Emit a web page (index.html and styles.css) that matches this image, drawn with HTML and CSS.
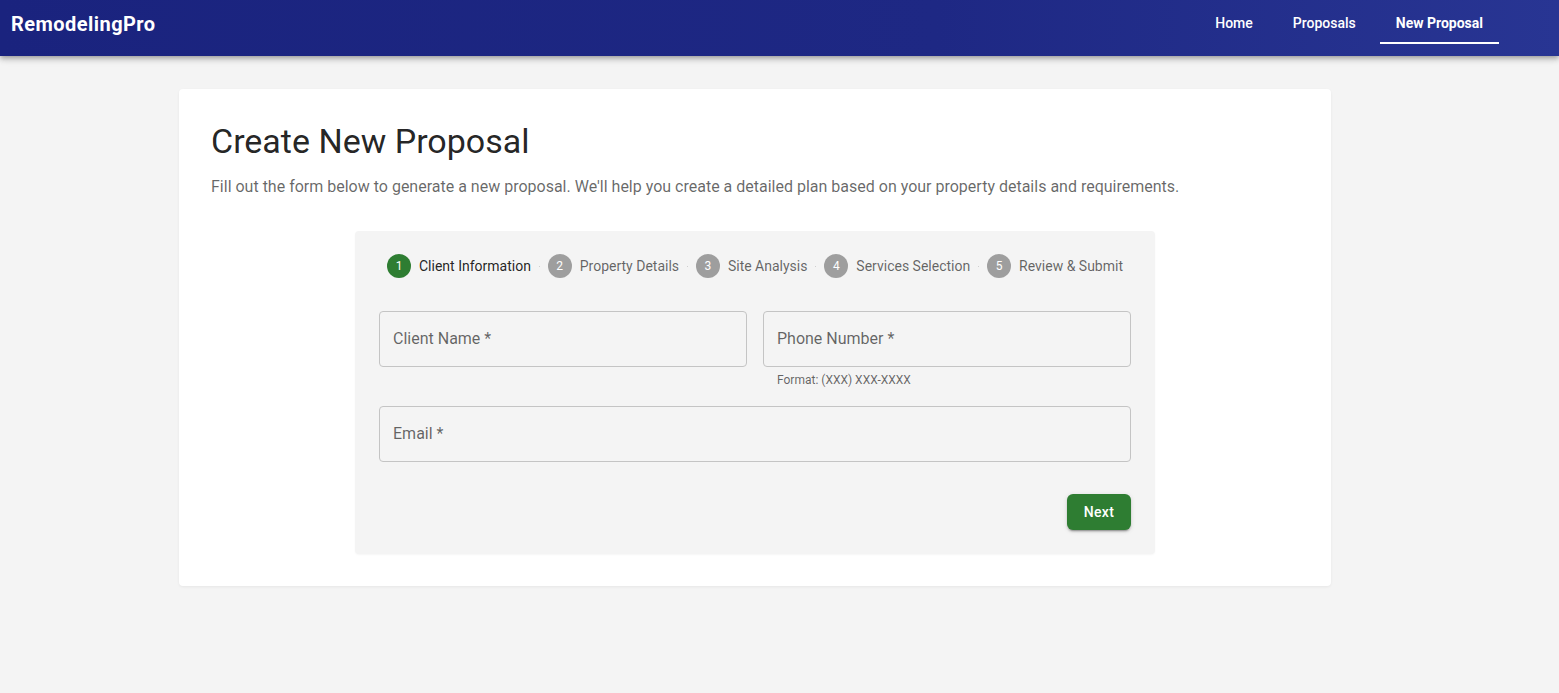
FILE: index.html
```html
<!DOCTYPE html>
<html lang="en">
<head>
<meta charset="utf-8">
<title>RemodelingPro - New Proposal</title>
<link rel="stylesheet" href="styles.css">
</head>
<body>
<header class="appbar">
  <div class="brand">RemodelingPro</div>
  <nav class="nav">
    <a class="nav-link" href="#">Home</a>
    <a class="nav-link" href="#">Proposals</a>
    <a class="nav-link active" href="#">New Proposal</a>
  </nav>
</header>
<main class="container">
  <section class="card">
    <h1 class="title">Create New Proposal</h1>
    <p class="intro">Fill out the form below to generate a new proposal. We'll help you create a detailed plan based on your property details and requirements.</p>
    <div class="form-paper">
      <ol class="stepper">
        <li class="step active"><span class="step-icon">1</span><span class="step-label">Client Information</span></li>
        <li class="connector"></li>
        <li class="step"><span class="step-icon">2</span><span class="step-label">Property Details</span></li>
        <li class="connector"></li>
        <li class="step"><span class="step-icon">3</span><span class="step-label">Site Analysis</span></li>
        <li class="connector"></li>
        <li class="step"><span class="step-icon">4</span><span class="step-label">Services Selection</span></li>
        <li class="connector"></li>
        <li class="step"><span class="step-icon">5</span><span class="step-label">Review &amp; Submit</span></li>
      </ol>
      <div class="fields">
        <div class="field">
          <div class="input">Client Name *</div>
        </div>
        <div class="field">
          <div class="input">Phone Number *</div>
          <div class="helper">Format: (XXX) XXX-XXXX</div>
        </div>
        <div class="field wide">
          <div class="input">Email *</div>
        </div>
      </div>
      <div class="actions">
        <button class="btn-next" type="button">Next</button>
      </div>
    </div>
  </section>
</main>
</body>
</html>
```
FILE: styles.css
```css
* { box-sizing: border-box; }
html, body { margin: 0; padding: 0; }
body {
  background: #f4f4f4;
  font-family: Roboto, "Noto Sans", Arial, sans-serif;
  color: rgba(0,0,0,0.87);
  min-height: 693px;
}
.appbar {
  height: 56px;
  display: flex;
  align-items: center;
  justify-content: space-between;
  padding: 0 60px 0 11px;
  background: linear-gradient(90deg, #1a237e 0%, #1e2884 60%, #283593 100%);
  box-shadow: 0 2px 4px -1px rgba(0,0,0,0.2), 0 4px 5px 0 rgba(0,0,0,0.14), 0 1px 10px 0 rgba(0,0,0,0.12);
  position: relative;
  z-index: 1;
}
.brand {
  color: #fff;
  font-size: 20px;
  font-weight: 700;
  letter-spacing: 0.45px;
  margin-top: -8px;
}
.nav { display: flex; gap: 8px; height: 100%; align-items: flex-start; }
.nav-link {
  color: #fff;
  text-decoration: none;
  font-size: 14px;
  font-weight: 500;
  padding: 3px 16px 0;
  display: flex;
  align-items: center;
  height: 44px;
  border-bottom: 2px solid transparent;
}
.nav-link.active {
  font-weight: 700;
  border-bottom-color: #fff;
}
.container {
  width: 1201px;
  margin: 0 auto;
  padding-top: 33px;
}
.card {
  width: 1152px;
  background: #fff;
  border-radius: 4px;
  padding: 32px;
  box-shadow: 0 1px 3px 0 rgba(0,0,0,0.06);
}
.title {
  margin: 0 0 13px;
  font-size: 34px;
  font-weight: 400;
  line-height: 41px;
  color: rgba(0,0,0,0.87);
}
.intro {
  margin: 0 0 32px;
  font-size: 16px;
  line-height: 24px;
  color: rgba(0,0,0,0.6);
}
.form-paper {
  max-width: 800px;
  margin: 0 auto;
  background: #f4f4f4;
  border-radius: 4px;
  padding: 23px 24px 24px;
  box-shadow: 0 1px 2px 0 rgba(0,0,0,0.04);
}
.stepper {
  list-style: none;
  margin: 0 0 33px;
  padding: 0;
  display: flex;
  align-items: center;
  justify-content: center;
  height: 24px;
}
.step {
  display: flex;
  align-items: center;
  padding: 0 8px;
}
.step-icon {
  width: 24px;
  height: 24px;
  border-radius: 50%;
  background: #9e9e9e;
  color: #fff;
  font-size: 12px;
  display: flex;
  align-items: center;
  justify-content: center;
  margin-right: 8px;
}
.step.active .step-icon { background: #2e7d32; }
.step-label {
  font-size: 14px;
  color: rgba(0,0,0,0.6);
  white-space: nowrap;
}
.step.active .step-label { color: rgba(0,0,0,0.87); }
.connector {
  width: 2px;
  border-top: 1px solid #cfcfcf;
}
.fields {
  display: grid;
  grid-template-columns: 1fr 1fr;
  column-gap: 16px;
  row-gap: 16px;
}
.field.wide { grid-column: 1 / 3; }
.input {
  height: 56px;
  border: 1px solid #c4c4c4;
  border-radius: 4px;
  padding: 0 13px 1px;
  display: flex;
  align-items: center;
  font-size: 16px;
  color: rgba(0,0,0,0.6);
}
.helper {
  margin: 3px 14px 0;
  font-size: 12px;
  line-height: 20px;
  color: rgba(0,0,0,0.6);
}
.actions {
  display: flex;
  justify-content: flex-end;
  margin-top: 32px;
}
.btn-next {
  background: #2e7d32;
  color: #fff;
  border: none;
  border-radius: 6px;
  height: 36px;
  padding: 0 16px;
  min-width: 64px;
  font-family: inherit;
  font-size: 14px;
  font-weight: 500;
  letter-spacing: 0.4px;
  box-shadow: 0 3px 1px -2px rgba(0,0,0,0.2), 0 2px 2px 0 rgba(0,0,0,0.14), 0 1px 5px 0 rgba(0,0,0,0.12);
}
```
